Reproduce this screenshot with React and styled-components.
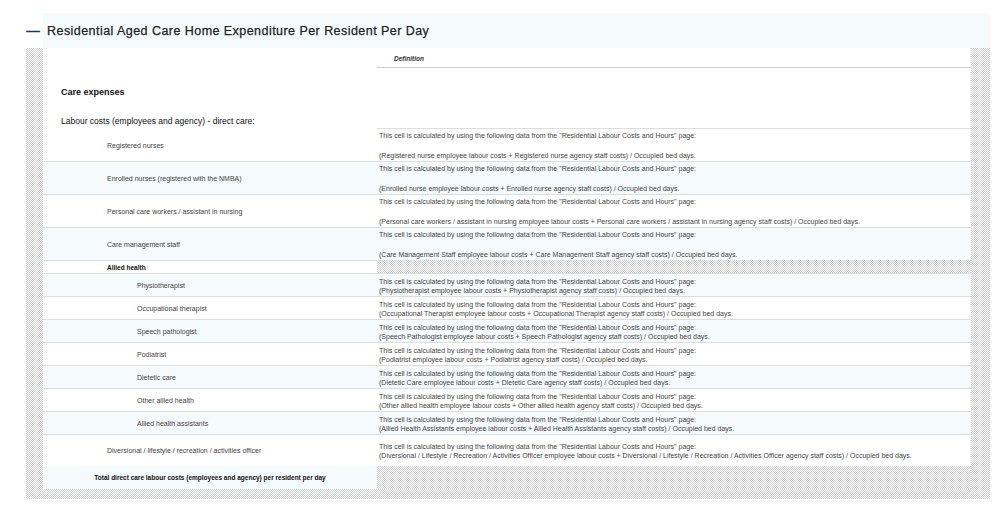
import React from "react";
import styled, { createGlobalStyle } from "styled-components";

const G = createGlobalStyle`
  *{box-sizing:border-box;}
  body{margin:0;background:#fff;font-family:"Liberation Sans",Arial,sans-serif;color:#333;}
`;
const hatch = `repeating-conic-gradient(#cfcfcf 0 25%, #fff 0 50%) 0 0/2px 2px`;
const Page = styled.div`padding:13px 12px 0 26px;width:1002px;`;
const Header = styled.div`display:flex;align-items:center;height:35px;`;
const Minus = styled.div`width:17px;font-size:14px;color:#1a3a6a;font-weight:bold;line-height:1;`;
const Title = styled.div`flex:1;height:35px;background:#f5fafd;display:flex;align-items:center;padding-left:4px;font-size:12.5px;color:#222;letter-spacing:0.45px;font-weight:500;-webkit-text-stroke:0.25px #222;`;
const Box = styled.div`background:${hatch};padding:0 19px 10px 17px;`;
const Inner = styled.div`background:#fff;`;
const Row = styled.div`display:grid;grid-template-columns:334px 1fr;min-height:${p=>p.h}px;background:${p=>p.alt?"#f5fafd":"#fff"};border-bottom:${p=>p.nb?"none":"1px solid #ddd"};`;
const Left = styled.div`display:flex;align-items:center;justify-content:${p=>p.center?"center":"flex-start"};padding-left:${p=>p.ind||0}px;font-size:${p=>p.fs||7}px;font-weight:${p=>p.b?"bold":"normal"};color:${p=>p.b?"#111":"#444"};`;
const Right = styled.div`display:flex;flex-direction:column;justify-content:${p=>p.spread?"space-between":"center"};padding:2px 2px 1px 2px;font-size:7px;color:#444;line-height:9px;white-space:nowrap;background:${p=>p.hatch?hatch:"transparent"};`;
const DefHead = styled.div`font-size:6.5px;font-style:italic;font-weight:bold;padding-left:17px;border-bottom:1px solid #ccc;display:flex;align-items:center;height:18px;margin-top:2px;color:#333;`;
const Section = styled.div`font-size:${p=>p.fs}px;font-weight:${p=>p.w};color:#111;padding:${p=>p.pad};`;
const Rule = styled.div`border-top:1px solid #ddd;`;

const intro = `This cell is calculated by using the following data from the "Residential Labour Costs and Hours" page:`;
const rows1 = [
  ["Registered nurses","(Registered nurse employee labour costs + Registered nurse agency staff costs) / Occupied bed days."],
  ["Enrolled nurses (registered with the NMBA)","(Enrolled nurse employee labour costs + Enrolled nurse agency staff costs) / Occupied bed days."],
  ["Personal care workers / assistant in nursing","(Personal care workers / assistant in nursing employee labour costs + Personal care workers / assistant in nursing agency staff costs) / Occupied bed days."],
  ["Care management staff","(Care Management Staff employee labour costs + Care Management Staff agency staff costs) / Occupied bed days."],
];
const rows2 = [
  ["Physiotherapist","(Physiotherapist employee labour costs + Physiotherapist agency staff costs) / Occupied bed days."],
  ["Occupational therapist","(Occupational Therapist employee labour costs + Occupational Therapist agency staff costs) / Occupied bed days."],
  ["Speech pathologist","(Speech Pathologist employee labour costs + Speech Pathologist agency staff costs) / Occupied bed days."],
  ["Podiatrist","(Podiatrist employee labour costs + Podiatrist agency staff costs) / Occupied bed days."],
  ["Dietetic care","(Dietetic Care employee labour costs + Dietetic Care agency staff costs) / Occupied bed days."],
  ["Other allied health","(Other allied health employee labour costs + Other allied health agency staff costs) / Occupied bed days."],
  ["Allied health assistants","(Allied Health Assistants employee labour costs + Allied Health Assistants agency staff costs) / Occupied bed days."],
];

export default function App(){
  return (<><G/><Page>
    <Header><Minus>—</Minus><Title>Residential Aged Care Home Expenditure Per Resident Per Day</Title></Header>
    <Box><Inner>
      <Row h={20} nb><div/><DefHead>Definition</DefHead></Row>
      <Section fs={9} w="bold" pad="19px 0 0 18px">Care expenses</Section>
      <Section fs={8.5} w="normal" pad="19px 0 2px 18px">Labour costs (employees and agency) - direct care:</Section>
      <Row h={0} nb><div/><Rule/></Row>
      {rows1.map((r,i)=>(
        <Row key={r[0]} h={i===3?32:33} alt={i%2===1} nb={i===3}>
          <Left ind={64}>{r[0]}</Left>
          <Right spread><span>{intro}</span><span>{r[1]}</span></Right>
        </Row>))}
      <Row h={14}><Left ind={64} b fs={6.5} style={{borderTop:"1px solid #ddd"}}>Allied health</Left><Right hatch/></Row>
      {rows2.map((r,i)=>(
        <Row key={r[0]} h={23} alt={i%2===0}>
          <Left ind={94}>{r[0]}</Left>
          <Right><span>{intro}</span><span>{r[1]}</span></Right>
        </Row>))}
      <Row h={31} nb>
        <Left ind={64}>Diversional / lifestyle / recreation / activities officer</Left>
        <Right><span>{intro}</span><span>(Diversional / Lifestyle / Recreation / Activities Officer employee labour costs + Diversional / Lifestyle / Recreation / Activities Officer agency staff costs) / Occupied bed days.</span></Right>
      </Row>
      <Row h={23} alt nb>
        <Left center b fs={6.5}>Total direct care labour costs (employees and agency) per resident per day</Left>
        <Right hatch/>
      </Row>
    </Inner></Box>
  </Page></>);
}
